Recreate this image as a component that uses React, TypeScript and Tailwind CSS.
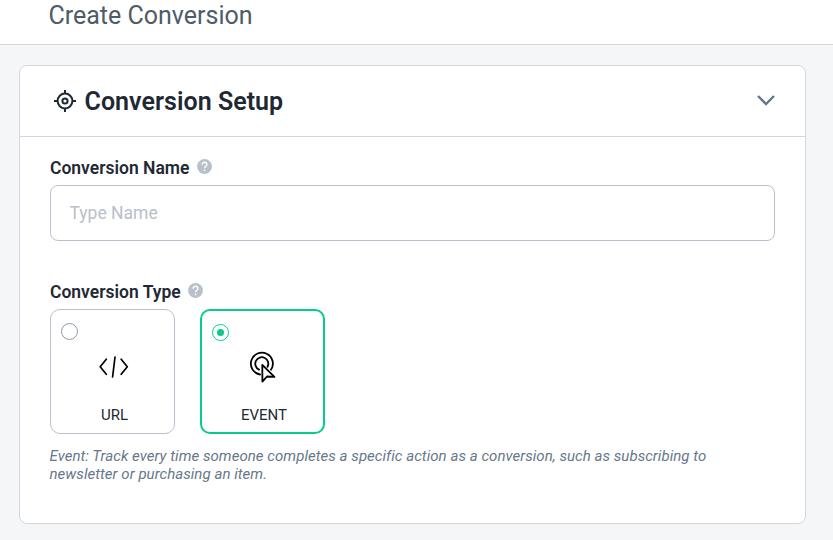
import type { ReactNode } from "react";

function TargetIcon() {
  return (
    <svg className="mb-px h-[22px] w-[22px] shrink-0" viewBox="0 0 22 22" fill="none" stroke="#1f2933" strokeWidth="2">
      <circle cx="11" cy="11" r="7.4" />
      <circle cx="11" cy="11" r="2.6" />
      <path d="M11 0v4M11 18v4M0 11h4M18 11h4" />
    </svg>
  );
}

function HelpIcon() {
  return (
    <svg className="mb-[3px] h-[15px] w-[15px]" viewBox="0 0 15 15" fill="none">
      <circle cx="7.5" cy="7.5" r="7.4" fill="#b8c0ca" />
      <path d="M5.1 5.7C5.1 4.1 6.1 3.3 7.5 3.3S9.9 4.2 9.9 5.5C9.9 7.1 7.6 7.3 7.6 9.2" stroke="#fff" strokeWidth="1.4" />
      <circle cx="7.6" cy="11.3" r="0.9" fill="#fff" />
    </svg>
  );
}

function CodeIcon() {
  return (
    <svg className="h-[22px] w-[30px]" viewBox="0 0 30 22" fill="none" stroke="#000" strokeWidth="1.7" strokeLinecap="round" strokeLinejoin="round">
      <path d="M7.3 3.2 1.2 10.8l6.1 7.5M22.2 3.2l6.1 7.6-6.1 7.5M16 1 13.6 21" />
    </svg>
  );
}

function ClickIcon() {
  return (
    <svg className="h-[32px] w-[28px]" viewBox="0 0 28 32" fill="none" stroke="#000" strokeWidth="1.8" strokeLinecap="round" strokeLinejoin="round">
      <path d="M11 23.5A11 11 0 1 1 22 18.8" />
      <path d="M10 18.6A6.5 6.5 0 1 1 18.5 15.8" />
      <path d="M13.3 13.8 25.4 25.8 18 25.5 13.4 30.6Z" />
    </svg>
  );
}

function FieldLabel({ children }: { children: ReactNode }) {
  return (
    <div className="flex h-[18px] items-center gap-[7.5px]">
      <span className="text-[17.5px] leading-[18px] font-semibold text-[#1f2933]">{children}</span>
      <HelpIcon />
    </div>
  );
}

export default function App() {
  return (
    <div className="h-[540px] w-[833px] overflow-hidden bg-[#f5f6f8] font-[Roboto,sans-serif]">
      <header className="h-[45px] border-b border-[#d2d7de] bg-white pl-[48.5px]">
        <h1 className="text-[25px] leading-[32px] text-[#4f5b67]">Create Conversion</h1>
      </header>
      <main className="pt-5 pl-[19px]">
        <section className="h-[459px] w-[787px] rounded-lg border border-[#d2d7de] bg-white">
          <div className="flex h-[71px] items-center border-b border-[#d2d7de] pr-[29px] pl-[33.5px]">
            <TargetIcon />
            <h2 className="mt-[2px] ml-[9px] text-[25px] leading-[30px] font-semibold tracking-[0.04px] text-[#1f2933]">Conversion Setup</h2>
            <svg className="mb-[2px] ml-auto h-[12px] w-[20px]" viewBox="0 0 20 12" fill="none" stroke="#66758a" strokeWidth="2.4">
              <path d="M2 2l8 8 8-8" />
            </svg>
          </div>
          <div className="px-[30px] pt-[22px]">
            <FieldLabel>Conversion Name</FieldLabel>
            <input
              className="mt-2 block h-[56px] w-[725px] rounded-lg border border-[#b8c0cc] bg-white px-[18.5px] text-[17.5px] text-[#1f2933] placeholder:text-[#b8c0ca]"
              placeholder="Type Name"
            />
            <div className="mt-[42px]">
              <FieldLabel>Conversion Type</FieldLabel>
            </div>
            <div className="mt-2 flex gap-[25px]">
              <div className="flex h-[125px] w-[125px] flex-col rounded-[10px] border border-[#b8c0cc] px-[10px] pt-[13px]">
                <span className="h-[17px] w-[17px] shrink-0 rounded-full border border-[#8c99a9]" />
                <div className="mt-[16px] flex h-[22px] justify-center pl-[3px]">
                  <CodeIcon />
                </div>
                <span className="mt-[28px] pl-1 text-center text-[15px] leading-[18px] text-[#1f2933]">URL</span>
              </div>
              <div className="flex h-[125px] w-[125px] flex-col rounded-[10px] border-2 border-[#06cc89] px-[10px] pt-[13px]">
                <span className="flex h-[17px] w-[17px] shrink-0 items-center justify-center rounded-full border border-[#06cc89]">
                  <span className="h-[7px] w-[7px] rounded-full bg-[#06cc89]" />
                </span>
                <div className="mt-[10px] flex h-[32px] justify-center pl-px">
                  <ClickIcon />
                </div>
                <span className="mt-[23px] pl-[3px] text-center text-[15px] leading-[18px] text-[#1f2933]">EVENT</span>
              </div>
            </div>
            <p className="mt-[13px] -ml-[0.5px] text-[15px] leading-[18px] tracking-[0.05px] text-[#66788a] italic">
              Event: Track every time someone completes a specific action as a conversion, such as subscribing to
              <br />
              newsletter or purchasing an item.
            </p>
          </div>
        </section>
      </main>
    </div>
  );
}
